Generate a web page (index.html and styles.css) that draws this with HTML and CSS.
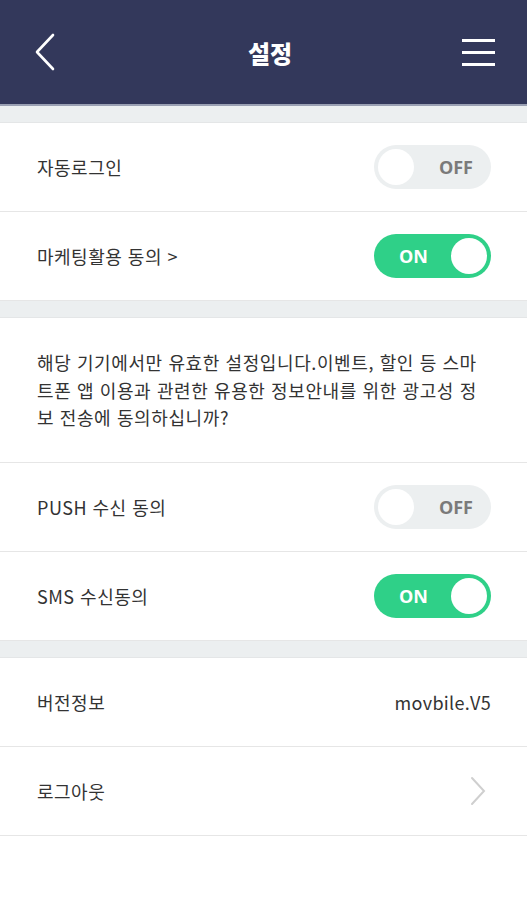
FILE: index.html
```html
<!DOCTYPE html>
<html lang="ko">
<head>
    <meta charset="UTF-8">
    <meta name="viewport" content="width=device-width, initial-scale=1.0">
    <title>설정</title>
    <link rel="stylesheet" href="styles.css">
</head>
<body>

<div class="header">
    <a class="back" href="#">
        <svg width="24" height="40" viewBox="0 0 24 40"><path d="M19 3 L3 20 L19 37" fill="none" stroke="#fff" stroke-width="2.6" stroke-linecap="round" stroke-linejoin="round"/></svg>
    </a>
    <h1>설정</h1>
    <a class="menu" href="#">
        <span></span><span></span><span></span>
    </a>
</div>

<div class="gap"></div>
<div class="row">
    <span class="label">자동로그인</span>
    <div class="toggle off"><span class="knob"></span><span class="txt">OFF</span></div>
</div>
<div class="row">
    <span class="label">마케팅활용 동의 &gt;</span>
    <div class="toggle on"><span class="txt">ON</span><span class="knob"></span></div>
</div>

<div class="gap"></div>
<div class="notice">
    해당 기기에서만 유효한 설정입니다.이벤트, 할인 등 스마트폰 앱 이용과 관련한 유용한 정보안내를 위한 광고성 정보 전송에 동의하십니까?
</div>
<div class="row">
    <span class="label">PUSH 수신 동의</span>
    <div class="toggle off"><span class="knob"></span><span class="txt">OFF</span></div>
</div>
<div class="row">
    <span class="label">SMS 수신동의</span>
    <div class="toggle on"><span class="txt">ON</span><span class="knob"></span></div>
</div>

<div class="gap"></div>
<div class="row">
    <span class="label">버전정보</span>
    <span class="value">movbile.V5</span>
</div>
<div class="row">
    <span class="label">로그아웃</span>
    <svg class="arrow" width="18" height="32" viewBox="0 0 18 32"><path d="M3 3 L15 16 L3 29" fill="none" stroke="#cfcfcf" stroke-width="2" stroke-linecap="round"/></svg>
</div>

</body>
</html>
```

FILE: styles.css
```css
body {
    margin: 0;
    font-family: "Noto Sans CJK KR", "Noto Sans", sans-serif;
    background-color: #fff;
    color: #333;
}
.header {
    height: 104px;
    background-color: #33385b;
    border-bottom: 2px solid #9aa0b3;
    display: flex;
    align-items: center;
    justify-content: space-between;
    padding: 0 32px 0 34px;
}
.header h1 {
    margin: 0;
    color: #fff;
    font-size: 24px;
    font-weight: 900;
    padding-left: 8px;
}
.back {
    display: flex;
    width: 36px;
}
.menu {
    display: flex;
    flex-direction: column;
    gap: 9px;
    width: 33px;
}
.menu span {
    display: block;
    height: 3px;
    background-color: #fff;
}
.gap {
    height: 16px;
    background-color: #eceff0;
    border-bottom: 1px solid #e4e6e7;
}
.row {
    height: 88px;
    display: flex;
    align-items: center;
    justify-content: space-between;
    padding: 0 36px 0 37px;
    border-bottom: 1px solid #e6e6e6;
}
.label {
    font-size: 18px;
    letter-spacing: 0.5px;
    color: #333;
}
.value {
    font-size: 18px;
    letter-spacing: 0.3px;
    color: #333;
}
.arrow {
    margin-right: 4px;
}
.toggle {
    width: 117px;
    height: 44px;
    border-radius: 22px;
    box-sizing: border-box;
    padding: 0 4px;
    display: flex;
    align-items: center;
    justify-content: space-between;
}
.toggle .knob {
    width: 36px;
    height: 36px;
    border-radius: 50%;
    background-color: #fff;
}
.toggle .txt {
    font-family: "Open Sans", sans-serif;
    font-size: 18px;
    font-weight: bold;
}
.toggle.off {
    background-color: #eceff0;
}
.toggle.off .txt {
    color: #7a7a7a;
    margin-right: 14px;
}
.toggle.on {
    background-color: #2fd088;
}
.toggle.on .txt {
    color: #fff;
    margin-left: 21px;
}
.notice {
    padding: 31px 46px 30px 37px;
    font-size: 18px;
    letter-spacing: 0.6px;
    line-height: 27.5px;
    color: #333;
    word-break: break-all;
    border-bottom: 1px solid #e6e6e6;
}
```
